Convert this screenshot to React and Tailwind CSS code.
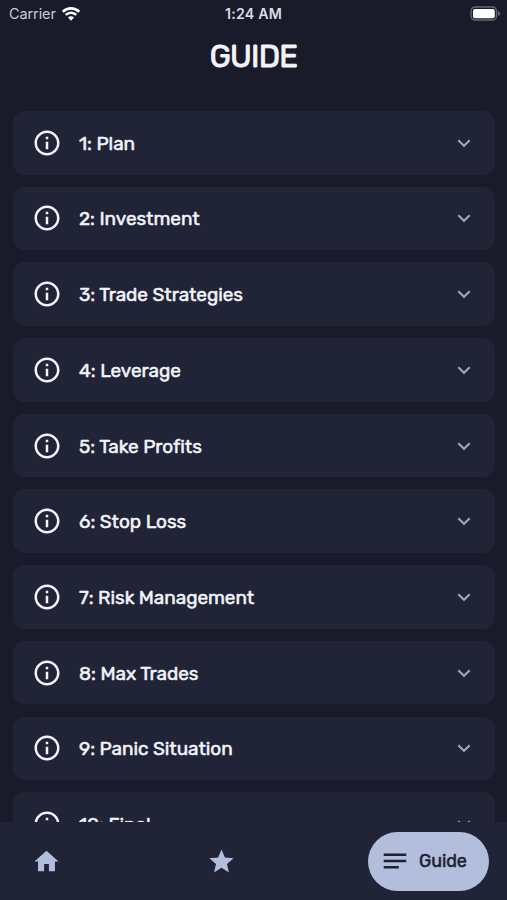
import React from "react";

const items = [
  "1: Plan",
  "2: Investment",
  "3: Trade Strategies",
  "4: Leverage",
  "5: Take Profits",
  "6: Stop Loss",
  "7: Risk Management",
  "8: Max Trades",
  "9: Panic Situation",
  "10: Final",
];

function Icon({ d, className }) {
  return (
    <svg viewBox="0 0 24 24" fill="currentColor" className={`shrink-0 ${className}`}>
      <path d={d} />
    </svg>
  );
}

const INFO =
  "M11 7h2v2h-2zm0 4h2v6h-2zm1-9C6.48 2 2 6.48 2 12s4.48 10 10 10 10-4.48 10-10S17.52 2 12 2zm0 18c-4.41 0-8-3.59-8-8s3.59-8 8-8 8 3.59 8 8-3.59 8-8 8z";
const HOME = "M10 20v-6h4v6h5v-8h3L12 3 2 12h3v8z";
const STAR =
  "M12 17.27L18.18 21l-1.64-7.03L22 9.24l-7.19-.61L12 2 9.19 8.63 2 9.24l5.46 4.73L5.82 21z";
const NOTES = "M3 18h12v-2H3v2zM3 6v2h18V6H3zm0 7h18v-2H3v2z";

function StatusBar() {
  return (
    <div className="grid h-[27px] shrink-0 grid-cols-3 items-center pl-[9px] pr-[6px] font-['Inter',sans-serif]">
      <div className="flex items-center gap-[6px] text-[14.5px] tracking-[-0.1px] text-[#c9cbd7]">
        <span>Carrier</span>
        <svg viewBox="0 0 18 14" className="h-[14px] w-[18px] text-white" fill="none" stroke="currentColor">
          <path d="M.8 4.7a11.7 11.7 0 0 1 16.4 0" strokeWidth="2.6" />
          <path d="M3.7 7.9a7.5 7.5 0 0 1 10.6 0" strokeWidth="2.4" />
          <path d="M9 13.8 6 10.6a4.2 4.2 0 0 1 6 0z" fill="currentColor" stroke="none" />
        </svg>
      </div>
      <div className="whitespace-nowrap pr-[3px] text-center text-[14.2px] font-semibold tracking-[0.2px] text-[#dcdde6]">1:24 AM</div>
      <svg viewBox="0 0 31 15" className="h-[15px] w-[31px] justify-self-end">
        <rect x="1" y="1" width="25.5" height="13" rx="4" fill="none" stroke="#696a76" strokeWidth="1.3" />
        <rect x="3" y="3" width="21.8" height="9.2" rx="2" fill="#fff" />
        <path d="M28 5v5q2.2-1 2.2-2.5T28 5z" fill="#696a76" />
      </svg>
    </div>
  );
}

function GuideRow({ label }) {
  return (
    <div className="flex h-[63.6px] shrink-0 items-center rounded-[12px] bg-[#202436] pl-[18.5px] pr-[22px]">
      <Icon d={INFO} className="size-[30px]" />
      <span className="ml-[17.5px] flex-1 whitespace-nowrap pt-[2px] text-[19px] font-normal leading-6 tracking-[-0.06px] [-webkit-text-stroke:0.5px_currentColor]">
        {label}
      </span>
      <svg viewBox="0 0 18 18" className="size-[18px]" fill="none" stroke="#a6a8bc" strokeWidth="2">
        <path d="M3.3 6.3 9 11.8l5.7-5.5" />
      </svg>
    </div>
  );
}

export default function App() {
  return (
    <div className="flex h-[900px] w-[507px] flex-col overflow-hidden bg-[#1a1b2a] font-['Rubik','Roboto',sans-serif] text-[#f3f4fb]">
      <StatusBar />
      <h1 className="flex h-[84px] shrink-0 items-start justify-center pt-[10px] text-[31px] font-normal leading-[40px] tracking-[-0.8px] [-webkit-text-stroke:0.9px_currentColor]">
        <span>GUIDE</span>
      </h1>
      <main className="flex min-h-0 flex-1 flex-col gap-[12.1px] overflow-hidden pl-[13px] pr-[12.5px]">
        {items.map((label) => (
          <GuideRow key={label} label={label} />
        ))}
      </main>
      <nav className="flex h-[78px] shrink-0 items-center bg-[#202436] pl-[32px] pr-[18px] text-[#b2bedb]">
        <Icon d={HOME} className="size-[29px]" />
        <Icon d={STAR} className="ml-[145.5px] size-[29px]" />
        <div className="ml-auto flex h-[59px] w-[121px] items-center rounded-full bg-[#b2bedb] pl-[12px] text-[#1c2033]">
          <Icon d={NOTES} className="size-[30px]" />
          <span className="ml-[9px] pt-px text-[18px] font-normal tracking-[-0.1px] [-webkit-text-stroke:0.5px_currentColor]">Guide</span>
        </div>
      </nav>
    </div>
  );
}
